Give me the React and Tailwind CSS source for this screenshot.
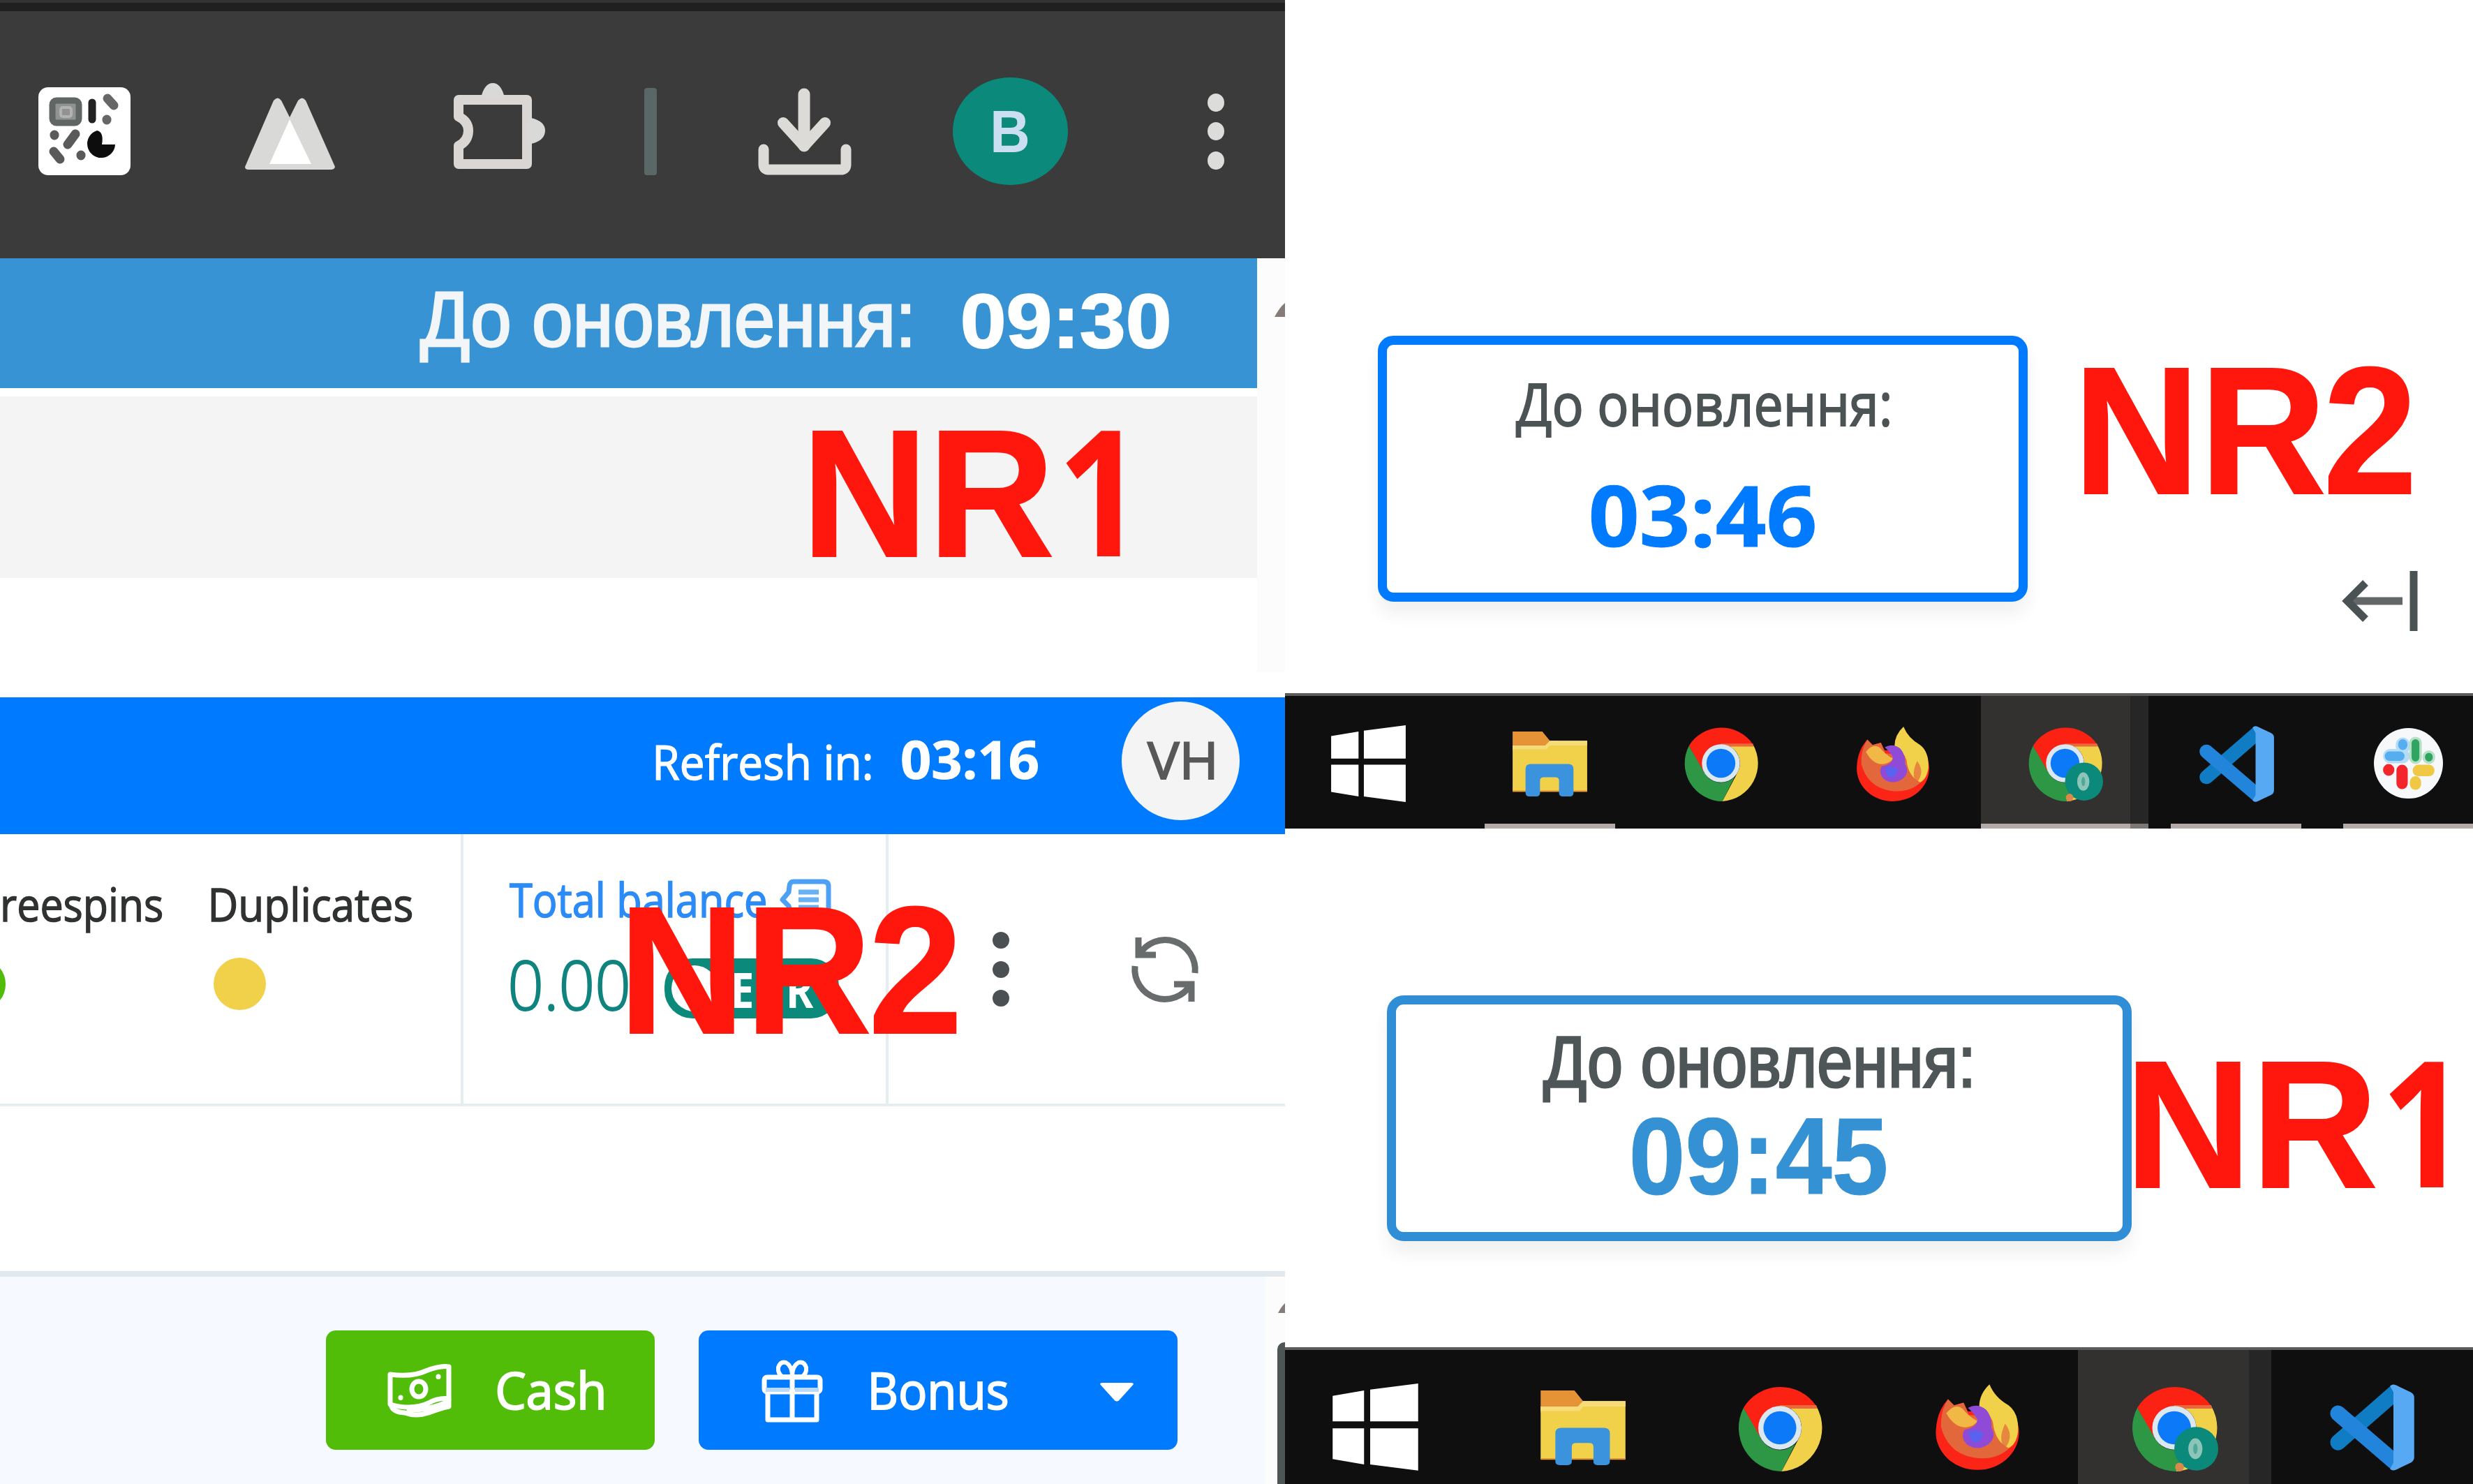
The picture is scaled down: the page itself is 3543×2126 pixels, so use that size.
import React, { useLayoutEffect, useRef, useState } from "react";

const SANS = "font-['Liberation_Sans',sans-serif]";
const UI = "font-['Open_Sans','Noto_Sans',sans-serif]";

// One line of text whose ink is stretched to fill the width of its box.
function Fit({ className = "", children }) {
  const outer = useRef(null);
  const inner = useRef(null);
  const [transform, setTransform] = useState("none");
  useLayoutEffect(() => {
    const cs = getComputedStyle(inner.current);
    const ctx = document.createElement("canvas").getContext("2d");
    ctx.font = `${cs.fontWeight} ${cs.fontSize} ${cs.fontFamily}`;
    const m = ctx.measureText(children);
    const ink = m.actualBoundingBoxLeft + m.actualBoundingBoxRight;
    const scale = outer.current.clientWidth / ink;
    setTransform(`translateX(${m.actualBoundingBoxLeft * scale}px) scaleX(${scale})`);
  }, [children]);
  return (
    <div ref={outer} className={`shrink-0 leading-none whitespace-nowrap ${className}`}>
      <span ref={inner} className="inline-block origin-left leading-none" style={{ transform }}>
        {children}
      </span>
    </div>
  );
}

function Svg({ box = "0 0 100 100", className, children }) {
  return (
    <svg viewBox={box} preserveAspectRatio="none" fill="none" className={`block shrink-0 overflow-visible ${className}`}>
      {children}
    </svg>
  );
}

const Windows = ({ className }) => (
  <Svg className={className}>
    <path fill="#fff" d="M1 14 37 8V43H1zM44 7 99 0V43H44zM1 51H37V92L1 86zM44 51H99V99L44 92z" />
  </Svg>
);

const Folder = ({ className }) => (
  <Svg className={className}>
    <path fill="#e69237" d="M1 1H40L50 15H60V30H1z" />
    <path fill="#f1d14a" d="M1 22H44L50 15H99V91H1z" />
    <path fill="#f6dc78" d="M1 22H44L50 15H99V22H50L46 28H1z" />
    <path stroke="#e69237" strokeWidth="2" d="M1 91H99" />
    <path fill="#3a93dc" d="M18 57Q18 50 25 50H74Q81 50 81 57V94Q81 99 76 99H67Q62 99 62 94V75Q62 70 57 70H42Q37 70 37 75V94Q37 99 32 99H23Q18 99 18 94z" />
  </Svg>
);

const Chrome = ({ className, badge }) => (
  <Svg className={className}>
    <path fill="#fb2213" d="M8 27A50 50 0 0 1 92 25H50L27 62z" />
    <path fill="#2d9745" d="M8 27 28 62A25 25 0 0 0 68 68L52 100A50 50 0 0 1 8 27z" />
    <path fill="#f1d14a" d="M92 25A50 50 0 0 1 52 100L72 62A25 25 0 0 0 50 25z" />
    <path fill="#e8693a" d="M50 24H92L93 28H50z" />
    <circle cx="50" cy="50" r="25" fill="#dbe8f2" />
    <circle cx="50" cy="50" r="19" fill="#0b79f8" />
    {badge && <circle cx="75" cy="74" r="25" fill="#0b8a7b" />}
    {badge && <ellipse cx="74" cy="74" rx="8" ry="12" fill="#8cc5b8" />}
    {badge && <ellipse cx="74" cy="74" rx="2.500" ry="6" fill="#4fa898" />}
    {badge && <circle cx="56" cy="95" r="5" fill="#d98a4a" />}
  </Svg>
);

const Firefox = ({ className }) => (
  <Svg className={className}>
    <path fill="#fb2416" d="M16 18 23 25 34 22 39 32 58 32 62 10 86 30Q99 42 98 58A48 43 0 0 1 50 99A48 43 0 0 1 2 54Q3 32 16 18z" />
    <path fill="#e2683b" d="M16 18 23 25 34 22 40 36 92 40Q98 58 88 73Q72 89 46 85Q16 80 8 50Q7 32 16 18z" />
    <path fill="#f1d14a" d="M64 1Q70 16 86 25Q98 34 97 55Q95 70 86 74Q70 66 68 45Q65 34 52 27Q52 12 64 1z" />
    <path fill="#f1b846" d="M14 34Q24 22 33 29Q40 38 50 43Q46 49 38 50Q24 52 14 34z" />
    <path fill="#904bd6" d="M39 28Q50 22 60 30Q67 38 66 50Q73 62 62 70Q50 78 38 70Q30 62 35 53Q50 50 50 41Q45 33 39 28z" />
    <path fill="#5b62f0" d="M40 55Q50 52 57 57Q54 68 46 68Q40 64 40 55z" />
    <path fill="#e2683b" d="M82 46Q93 60 82 74Q73 65 82 46z" opacity=".7" />
  </Svg>
);

const VSCode = ({ className }) => (
  <Svg className={className}>
    <path stroke="#0f7cc4" strokeWidth="18" strokeLinecap="round" d="M11 67 76 11" />
    <path stroke="#2384dc" strokeWidth="18" strokeLinecap="round" d="M11 34 76 89" />
    <path fill="#56a9f2" d="M71 3Q74 0 78 2L95 10Q99 12 99 16V84Q99 88 95 90L78 98Q74 100 71 97L75 90V10z" />
  </Svg>
);

const Slack = ({ className }) => (
  <Svg className={className}>
    <circle cx="50" cy="50" r="49" fill="#f7f8fa" />
    <g strokeLinecap="round">
      <path stroke="#b5dcf6" strokeWidth="20" d="M42 24V27M24 40H42" />
      <path stroke="#56aef0" strokeWidth="13" d="M42 23V25M23 40H38" />
      <path stroke="#b7e0c6" strokeWidth="18" d="M60 22V42M79 41V42" />
      <path stroke="#2fa561" strokeWidth="11" d="M60 22V42M79 41V42" />
      <path stroke="#f0c843" strokeWidth="16" d="M64 60H79M60 76V79" />
      <path stroke="#f3262c" strokeWidth="16" d="M41 60V78M22 59V59.500" />
    </g>
  </Svg>
);

const ArrowHint = ({ className }) => (
  <Svg className={className}>
    <path fill="#857b79" d="M0 100 Q50 30 100 0V100z" />
  </Svg>
);

function Marker({ last, className }) {
  return (
    <div className={`absolute flex font-bold text-[#ff170e] ${className}`}>
      <Fit className={`w-[342px] text-[260px] [-webkit-text-stroke:2px_#ff170e] ${SANS}`}>NR</Fit>
      {last === "1" ? (
        <Fit className={`-mt-[2px] ml-[21px] w-[78px] text-[251px] ${UI}`}>1</Fit>
      ) : (
        <Fit className={`ml-[8px] w-[121px] text-[260px] [-webkit-text-stroke:2px_#ff170e] ${SANS}`}>2</Fit>
      )}
    </div>
  );
}

function BrowserPanel() {
  return (
    <section className="flex h-[999px] flex-col">
      <div className="h-[4px] bg-[#333]" />
      <div className="h-[12px] bg-[#202020]" />
      <div className="flex h-[354px] items-start bg-[#3b3b3b] pl-[55px]">
        <Svg box="0 0 132 126" className="mt-[109px] h-[126px] w-[132px]">
          <rect width="132" height="126" rx="14" fill="#fff" />
          <rect x="17" y="16" width="44" height="38" rx="8" fill="#8f9391" />
          <rect x="20" y="19" width="38" height="32" rx="6" stroke="#5f6664" strokeWidth="9" />
          <rect x="32" y="29" width="15" height="13" rx="3" stroke="#b4b2b1" strokeWidth="4" />
          <path stroke="#222" strokeWidth="11" strokeLinecap="round" d="M77 22V46" />
          <path stroke="#666" strokeWidth="13" strokeLinecap="round" d="M99 16 108 26M98 46V47" />
          <path stroke="#5a5a5a" strokeWidth="13" strokeLinecap="round" d="M23 68V69M53 67 42 82M22 92 31 103M61 97V98" />
          <path fill="#0d0d0d" d="M84 62Q94 64 91 82H110A20 20 0 1 1 84 62z" />
        </Svg>
        <Svg box="0 0 133 106" className="mt-[121px] ml-[162px] h-[106px] w-[133px]">
          <path fill="#d9dad7" d="M2 102 43 7Q49 0 54 7L66 31 78 7Q84 0 89 7L131 102Q130 106 125 106H7Q2 106 2 102z" />
          <path fill="#fff" d="M66 34 97 98H37z" />
        </Svg>
        <Svg box="0 0 134 124" className="mt-[102px] ml-[165px] h-[124px] w-[134px]">
          <path stroke="#d9d6d4" strokeWidth="14" strokeLinejoin="round" d="M10 25H108V117H10V91Q24 84 24 69 24 56 10 49z" />
          <path fill="#d9dad7" d="M42 22Q47 1 59 1 71 1 76 22zM109 50Q134 54 134 69 134 85 109 89z" />
        </Svg>
        <div className="mt-[110px] ml-[142px] h-[125px] w-[18px] rounded bg-[#596766]" />
        <Svg box="0 0 134 126" className="mt-[109px] ml-[145px] h-[126px] w-[134px]">
          <g stroke="#dddbd8" strokeLinecap="round" strokeLinejoin="round">
            <path strokeWidth="17" d="M66 10V84" />
            <path strokeWidth="16" d="M36 51 66 84 96 51" />
            <path strokeWidth="15" d="M8 89V111Q8 118 16 118H118Q126 118 126 111V89" />
          </g>
        </Svg>
        <div className="mt-[95px] ml-[145px] flex h-[154px] w-[165px] justify-center rounded-[50%] bg-[#0b8a7b]">
          <Fit className={`mt-[34px] w-[50px] text-[86px] font-bold text-[#cbdff2] ${SANS}`}>B</Fit>
        </div>
        <Svg box="0 0 28 116" className="mt-[114px] ml-[198px] h-[116px] w-[28px]">
          <g fill="#dcdcda">
            <ellipse cx="14" cy="17" rx="12" ry="13" />
            <ellipse cx="14" cy="58" rx="12" ry="13" />
            <ellipse cx="14" cy="100" rx="12" ry="13" />
          </g>
        </Svg>
      </div>
      <div className="flex">
        <div className="flex w-[1801px] flex-col">
          <div className="flex h-[186px] items-start bg-[#3793d3] pl-[602px] text-white">
            <Fit className={`mt-[33px] w-[701px] text-[111px] text-[#f3f6f8] [-webkit-text-stroke:3px_#f3f6f8] ${SANS}`}>До оновлення:</Fit>
            <Fit className={`mt-[35px] ml-[77px] w-[294px] text-[110px] font-bold [-webkit-text-stroke:2px_#fff] ${SANS}`}>09:30</Fit>
          </div>
          <div className="h-[12px] bg-white" />
          <div className="h-[260px] bg-[#f4f4f4]" />
        </div>
        <div className="flex h-[593px] w-[40px] flex-col items-end bg-[#fcfcfc]">
          <ArrowHint className="mt-[64px] h-[20px] w-[15px]" />
        </div>
      </div>
    </section>
  );
}

function AccountPanel() {
  return (
    <section className="flex h-[1127px] flex-col bg-white">
      <header className="flex h-[196px] items-start bg-[#007aff] pl-[940px] text-white">
        <Fit className={`mt-[58px] w-[307px] text-[68px] [-webkit-text-stroke:1.5px_#fff] ${UI}`}>Refresh in:</Fit>
        <Fit className={`mt-[51px] ml-[45px] w-[195px] text-[75px] font-bold [-webkit-text-stroke:1px_#fff] ${UI}`}>03:16</Fit>
        <div className="mt-[6px] ml-[120px] flex h-[170px] w-[169px] justify-center rounded-[50%] bg-[#f4f4f4]">
          <Fit className={`mt-[46px] w-[95px] text-[74px] font-medium text-[#585858] [-webkit-text-stroke:2px_#585858] ${UI}`}>VH</Fit>
        </div>
      </header>
      <div className="flex h-[390px] border-b-4 border-[#e6edf1] text-[#303232]">
        <div className="flex w-[664px] border-r-4 border-[#e6edf1]">
          <div className="flex w-[301px] flex-col pt-[66px]">
            <Fit className={`-ml-[25px] w-[257px] text-[66px] [-webkit-text-stroke:1.5px_#303232] ${UI}`}>Freespins</Fit>
            <div className="mt-[46px] -ml-[67px] h-[74px] w-[75px] rounded-full border-[10px] border-[#51bd09] bg-[#a8cf4a]" />
          </div>
          <div className="flex flex-col pt-[66px]">
            <Fit className={`ml-[2px] w-[287px] text-[66px] [-webkit-text-stroke:1.5px_#303232] ${UI}`}>Duplicates</Fit>
            <div className="mt-[45px] ml-[5px] h-[75px] w-[75px] rounded-full bg-[#f1d14a]" />
          </div>
        </div>
        <div className="flex w-[609px] flex-col border-r-4 border-[#e6edf1] pt-[60px] pl-[66px]">
          <div className="flex items-start">
            <Fit className={`w-[367px] text-[67px] text-[#2b8bf7] [-webkit-text-stroke:1.5px_#2b8bf7] ${UI}`}>Total balance</Fit>
            <Svg box="0 0 72 54" className="mt-[5px] ml-[21px] h-[54px] w-[72px]">
              <path stroke="#4ea1f2" strokeWidth="7" strokeLinejoin="round" d="M19 3H62Q69 3 69 10V51H16L12 38 3 29 12 18 13 9Q14 3 19 3z" />
              <path stroke="#69b0f4" strokeWidth="7" d="M26 18H55M26 29H55M26 40H55" />
            </Svg>
          </div>
          <div className="mt-[39px] flex items-start">
            <Fit className={`ml-[2px] w-[167px] text-[97px] font-light text-[#0f847f] [-webkit-text-stroke:2px_#0f847f] ${UI}`}>0.00</Fit>
            <div className="mt-[12px] ml-[53px] flex h-[86px] w-[250px] items-start rounded-[40px] bg-[#0b8a7b]">
              <div className="mt-[10px] ml-[10px] h-[66px] w-[66px] rounded-full bg-white" />
              <Fit className={`mt-[9px] ml-[24px] w-[114px] text-[70px] font-bold text-white ${UI}`}>EUR</Fit>
            </div>
          </div>
        </div>
        <Svg box="0 0 26 110" className="mt-[139px] ml-[148px] h-[110px] w-[26px]">
          <g fill="#4b5152">
            <circle cx="13" cy="13" r="12" />
            <circle cx="13" cy="55" r="12" />
            <circle cx="13" cy="96" r="12" />
          </g>
        </Svg>
        <Svg className="mt-[144px] ml-[172px] h-[100px] w-[100px]">
          <g stroke="#686c6d" strokeWidth="9">
            <path d="M13 29A43 43 0 0 1 93 55M12 4V29H37" />
            <path d="M87 71A43 43 0 0 1 7 45M88 96V71H63" />
          </g>
        </Svg>
      </div>
      <div className="h-[236px]" />
      <div className="h-[8px] bg-[#e1e9ee]" />
      <div className="flex h-[297px]">
        <div className="flex w-[1813px] items-start bg-[#f6f9ff] pt-[77px] pl-[467px] text-white">
          <button className="flex h-[171px] w-[471px] items-start rounded-[14px] bg-[#51bd09]">
            <Svg box="0 0 90 76" className="mt-[48px] ml-[89px] h-[76px] w-[90px]">
              <g stroke="#fff" strokeWidth="7" strokeLinejoin="round" strokeLinecap="round">
                <path d="M3 15Q35 19 54 10 75 2 87 4V50Q72 48 58 56 35 67 3 58z" />
                <ellipse cx="44" cy="36" rx="10" ry="11" />
                <path d="M18 48V48.500M72 18V18.500" />
                <path d="M5 61Q8 69 24 70 40 76 58 70 76 63 87 61V51M30 66Q55 67 84 55" />
              </g>
            </Svg>
            <Fit className={`mt-[48px] ml-[67px] w-[151px] text-[73px] [-webkit-text-stroke:2px_#fff] ${UI}`}>Cash</Fit>
          </button>
          <button className="ml-[63px] flex h-[171px] w-[686px] items-start rounded-[14px] bg-[#007aff]">
            <Svg box="0 0 86 90" className="mt-[41px] ml-[91px] h-[90px] w-[86px]">
              <g stroke="#fff" strokeWidth="7" strokeLinejoin="round">
                <rect x="3" y="26" width="80" height="21" rx="4" />
                <path d="M8 47V87H78V47M43 25V87" />
                <path d="M43 25H29Q22 21 23 12 26 3 34 5 43 10 43 25H57Q64 21 63 12 60 3 52 5 43 10 43 25z" strokeWidth="6" />
              </g>
              <path stroke="#b9dafa" strokeWidth="6" d="M5 44H39M47 44H81" />
            </Svg>
            <Fit className={`mt-[48px] ml-[71px] w-[194px] text-[73px] [-webkit-text-stroke:2px_#fff] ${UI}`}>Bonus</Fit>
            <Svg className="mt-[75px] ml-[133px] h-[27px] w-[48px]">
              <path fill="#fff" d="M6 0H94Q104 2 97 14L56 94Q50 102 44 94L3 14Q-4 2 6 0z" />
            </Svg>
          </button>
        </div>
        <div className="flex w-[28px] flex-col items-end bg-[#fcfcfc]">
          <ArrowHint className="mt-[38px] h-[14px] w-[10px]" />
          <div className="mt-[42px] w-[11px] grow rounded-tl-[10px] bg-[#4d5555]" />
        </div>
      </div>
    </section>
  );
}

function App() {
  return (
    <main className="relative flex h-[2126px] w-[3543px] overflow-hidden bg-white">
      <div className="flex w-[1841px] shrink-0 flex-col overflow-hidden">
        <BrowserPanel />
        <AccountPanel />
      </div>

      <div className="flex w-[1702px] shrink-0 flex-col">
        <section className="flex h-[993px] items-start pt-[481px] pl-[133px]">
          <div className="flex h-[381px] w-[931px] flex-col items-center rounded-[22px] border-[13px] border-[#007aff] bg-white shadow-[0_18px_24px_rgba(0,0,0,0.06)]">
            <Fit className={`mt-[42px] mr-[2px] w-[534px] text-[84px] text-[#4b5354] [-webkit-text-stroke:2px_#4b5354] ${UI}`}>До оновлення:</Fit>
            <Fit className={`mt-[56px] w-[320px] text-[121px] font-bold text-[#007aff] [-webkit-text-stroke:1px_#007aff] ${UI}`}>03:46</Fit>
          </div>
          <Svg box="0 0 108 94" className="mt-[333px] ml-[451px] h-[94px] w-[108px]">
            <path stroke="#636768" strokeWidth="11" d="M6 47H86" />
            <path stroke="#4b5253" strokeWidth="11" d="M33 21 7 47 33 73M102 4V90" />
          </Svg>
        </section>

        <nav className="flex h-[194px] items-start border-t-4 border-[#5c5c5c] bg-[#0f0f0f]">
          <Windows className="mt-[42px] ml-[65px] h-[111px] w-[109px]" />
          <div className="ml-[112px] flex h-full w-[187px] flex-col items-center">
            <Folder className="mt-[50px] h-[95px] w-[109px]" />
            <div className="mt-auto h-[7px] w-full bg-[#b4aba9]" />
          </div>
          <Chrome className="mt-[42px] ml-[97px] h-[109px] w-[109px]" />
          <Firefox className="mt-[43px] ml-[138px] h-[109px] w-[108px]" />
          <div className="ml-[72px] flex h-full w-[214px] flex-col items-start bg-[#333130]">
            <Chrome badge className="mt-[42px] ml-[66px] h-[109px] w-[109px]" />
            <div className="mt-auto h-[7px] w-full bg-[#b4aba9]" />
          </div>
          <div className="flex h-full w-[26px] flex-col justify-end bg-[#262626]">
            <div className="h-[7px] bg-[#7c7876]" />
          </div>
          <div className="ml-[32px] flex h-full w-[187px] flex-col items-start">
            <VSCode className="mt-[42px] ml-[39px] h-[111px] w-[110px]" />
            <div className="mt-auto h-[7px] w-full bg-[#b4aba9]" />
          </div>
          <div className="ml-[60px] flex h-full w-[186px] flex-col items-start">
            <Slack className="mt-[45px] ml-[43px] h-[103px] w-[101px]" />
            <div className="mt-auto h-[7px] w-full bg-[#b4aba9]" />
          </div>
        </nav>

        <section className="flex h-[743px] items-start pt-[239px] pl-[146px]">
          <div className="flex h-[352px] w-[1067px] flex-col items-center rounded-[24px] border-[13px] border-[#2f8ed6] bg-white shadow-[0_18px_24px_rgba(0,0,0,0.06)]">
            <Fit className={`mt-[31px] mr-[8px] w-[612px] text-[103px] text-[#4f5657] [-webkit-text-stroke:3px_#4f5657] ${SANS}`}>До оновлення:</Fit>
            <Fit className={`mt-[5px] w-[363px] text-[156px] font-bold text-[#3491d4] [-webkit-text-stroke:1px_#3491d4] ${SANS}`}>09:45</Fit>
          </div>
        </section>

        <nav className="flex h-[196px] items-start border-t-4 border-[#5c5c5c] bg-[#0f0f0f]">
          <Windows className="mt-[48px] ml-[67px] h-[126px] w-[125px]" />
          <Folder className="mt-[57px] ml-[173px] h-[109px] w-[124px]" />
          <Chrome className="mt-[49px] ml-[158px] h-[125px] w-[124px]" />
          <Firefox className="mt-[48px] ml-[159px] h-[125px] w-[124px]" />
          <div className="ml-[82px] flex h-full w-[245px] items-start bg-[#333130]">
            <Chrome badge className="mt-[49px] ml-[75px] h-[125px] w-[126px]" />
          </div>
          <div className="h-full w-[32px] bg-[#262626]" />
          <VSCode className="mt-[48px] ml-[82px] h-[126px] w-[124px]" />
        </nav>
      </div>

      <Marker last="1" className="top-[577px] left-[1164px]" />
      <Marker last="2" className="top-[1260px] left-[902px]" />
      <Marker last="2" className="top-[487px] left-[2986px]" />
      <Marker last="1" className="top-[1481px] left-[3060px]" />
    </main>
  );
}

export default App;
